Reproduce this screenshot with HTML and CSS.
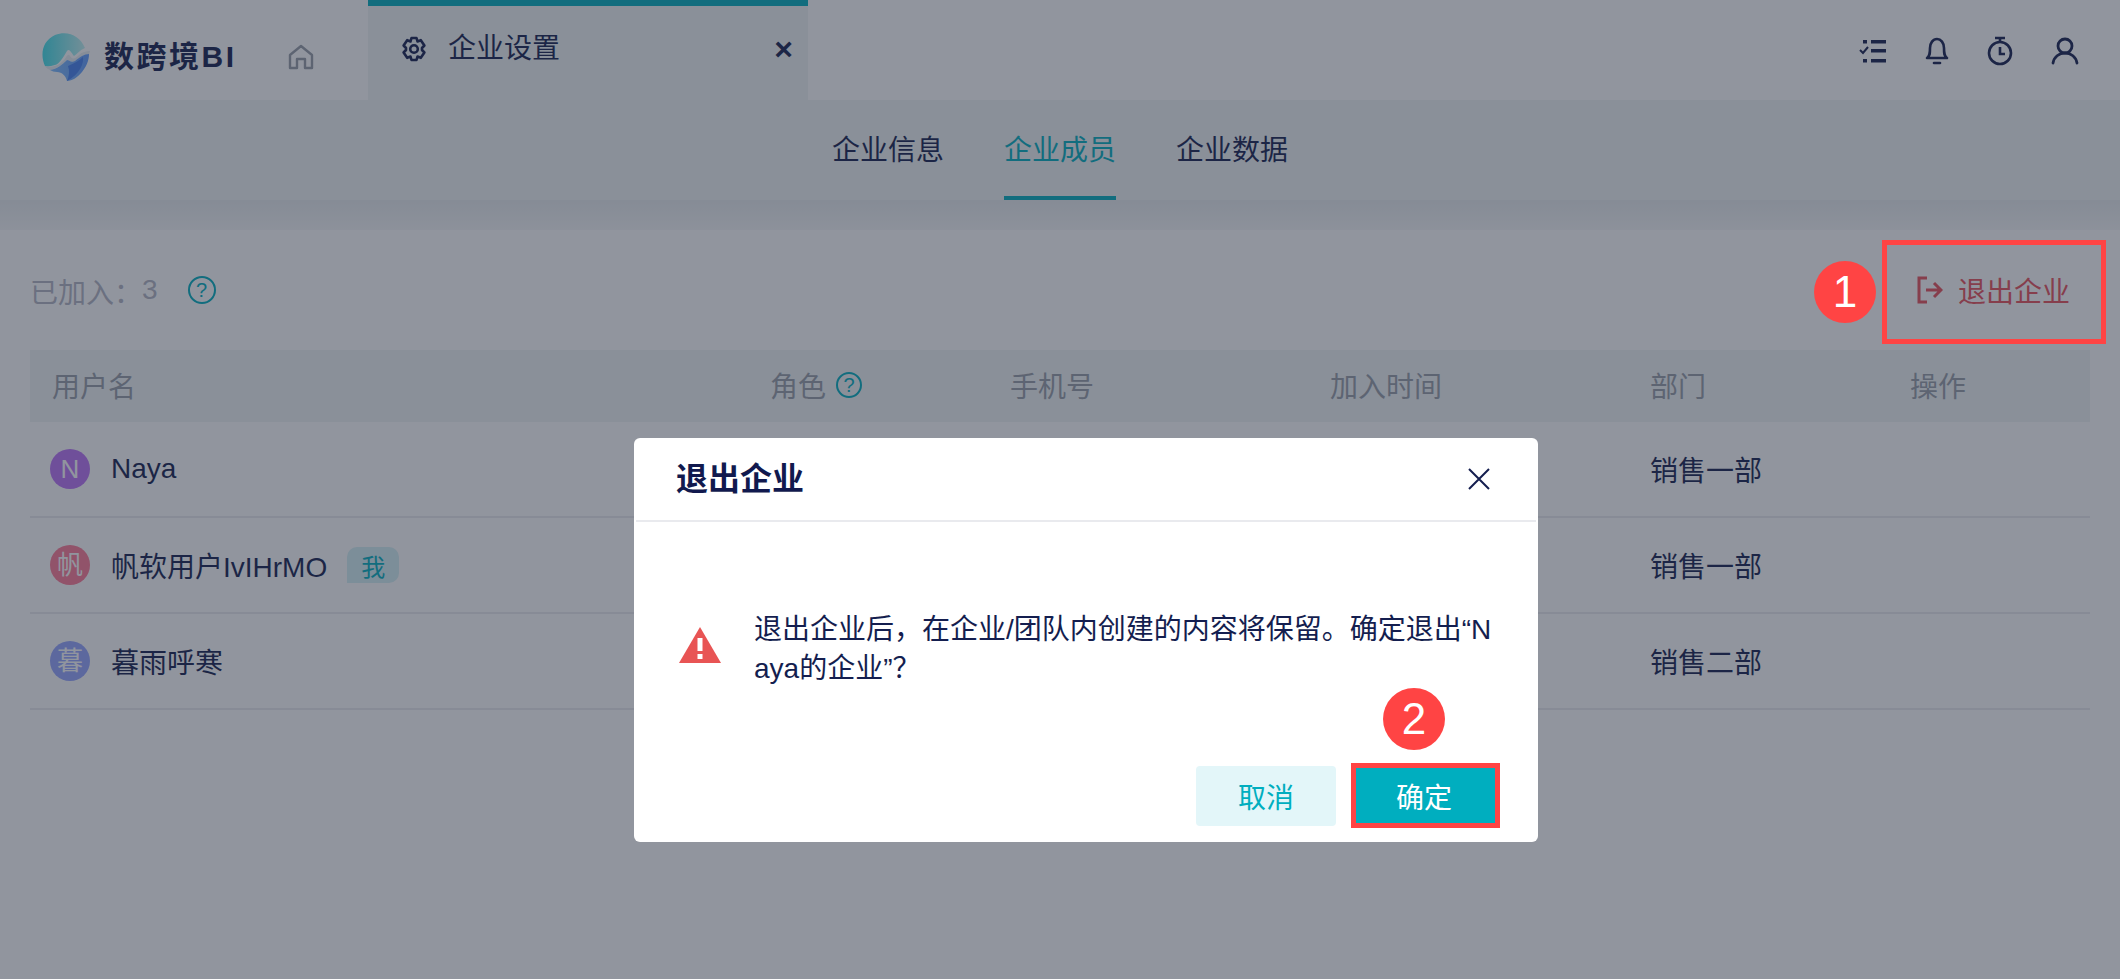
FILE: index.html
```html
<!DOCTYPE html>
<html lang="zh-CN">
<head>
<meta charset="utf-8">
<title>企业设置</title>
<link rel="stylesheet" href="styles.css">
</head>
<body>
<div class="page">
  <header class="topbar">
    <div class="brand">
      <svg class="logo" viewBox="0 0 48 48" width="48" height="48">
        <defs>
          <linearGradient id="lg1" x1="0" y1="0.3" x2="1" y2="0.3"><stop offset="0" stop-color="#3fe0ea"/><stop offset="1" stop-color="#c2f2f2"/></linearGradient>
          <linearGradient id="lg2" x1="0" y1="0" x2="1" y2="0"><stop offset="0" stop-color="#7fbdff"/><stop offset="1" stop-color="#5f9cff"/></linearGradient>
        </defs>
        <path d="M3 33C-2 22 0 8 13 2C26 -3 38 3 43 15C38 17 35 21 32 23C29 19 27 15 25 18C21 25 17 31 13 32C9 33 6 34 3 33Z" fill="url(#lg1)"/>
        <path d="M3 33C10 35 17 33 22 27C25 23 26 20 28 23C31 27 33 26 37 22C40 19 44 18 48 18L47 21C42 21 38 24 33 28C29 30 27 27 25 27C20 32 14 36 8 37C6 36 4 35 3 33Z" fill="#e8eef2"/>
        <path d="M8 37C15 36 20 32 25 27C27 27 29 30 33 28C38 24 42 21 47 21C47 28 44 34 40 39C36 44 30 48 25 48C24 43 20 39 15 39C12 39 10 38 8 37Z" fill="url(#lg2)"/>
        <path d="M26 33C32 30 37 28 41 24C42 30 38 41 25 48C27 43 28 38 26 33Z" fill="#4480f0"/>
      </svg>
      <span class="brand-name">数跨境BI</span>
    </div>
    <svg class="home" viewBox="0 0 26 26" width="26" height="26" fill="none" stroke="#979da7" stroke-width="2.400" stroke-linejoin="round"><path d="M13 2L24 11V24H17V15H9V24H2V11Z"/></svg>
    <div class="tab">
      <div class="tab-bar"></div>
      <div class="tab-body">
        <svg class="gear" viewBox="0 0 26 26" width="26" height="26" fill="none" stroke="#141e4f" stroke-width="2.600" stroke-linejoin="round"><path d="M10.500 2H15.500L16.500 5.500L19.800 4.200L23.400 9.500L21 12V14L23.400 16.500L19.800 21.800L16.500 20.500L15.500 24H10.500L9.500 20.500L6.200 21.800L2.600 16.500L5 14V12L2.600 9.500L6.200 4.200L9.500 5.500Z"/><circle cx="13" cy="13" r="3.800"/></svg>
        <span class="tab-title">企业设置</span>
        <span class="tab-close">×</span>
      </div>
    </div>
    <div class="top-icons">
      <svg viewBox="0 0 28 26" width="28" height="26" fill="#141e4f"><rect x="12" y="2" width="15" height="3.500"/><rect x="12" y="11" width="15" height="3.500"/><rect x="12" y="21" width="15" height="3.500"/><rect x="4" y="2" width="4" height="3.500"/><rect x="4" y="21" width="4" height="3.500"/><path d="M1 12L4 15L9 9" fill="none" stroke="#141e4f" stroke-width="2"/></svg>
      <svg viewBox="0 0 24 28" width="24" height="28" fill="none" stroke="#141e4f" stroke-width="2.600" stroke-linecap="round"><path d="M2 21C5 19 5 16 5 11C5 6 8 2 12 2C16 2 19 6 19 11C19 16 19 19 22 21Z" stroke-linejoin="round"/><path d="M9 26H15"/></svg>
      <svg viewBox="0 0 26 30" width="26" height="30" fill="none" stroke="#141e4f" stroke-width="2.600"><path d="M8 2H18M13 2V6"/><circle cx="13" cy="17" r="11"/><path d="M13 11V18H18"/></svg>
      <svg viewBox="0 0 28 28" width="28" height="28" fill="none" stroke="#141e4f" stroke-width="2.800" stroke-linecap="round"><circle cx="14" cy="9" r="7"/><path d="M2 26C3 20 8 16 14 16C20 16 25 20 26 26"/></svg>
    </div>
  </header>

  <nav class="subnav">
    <span class="subnav-item">企业信息</span>
    <span class="subnav-item active">企业成员</span>
    <span class="subnav-item">企业数据</span>
  </nav>
  <div class="subnav-shadow"></div>

  <main class="content">
    <div class="toolbar">
      <div class="joined">
        <span class="joined-label">已加入：</span><span class="joined-count">3</span>
        <span class="help help-large">?</span>
      </div>
      <div class="leave">
        <svg viewBox="0 0 26 28" width="26" height="28" fill="none" stroke="#e8505b" stroke-width="3"><path d="M10 2H2V26H10"/><path d="M9 14H24M17 7L24 14L17 21"/></svg>
        <span>退出企业</span>
      </div>
    </div>

    <div class="table">
      <div class="row head">
        <div>用户名</div>
        <div class="role">角色<span class="help">?</span></div>
        <div>手机号</div>
        <div>加入时间</div>
        <div>部门</div>
        <div>操作</div>
      </div>
      <div class="row">
        <div class="user"><span class="avatar purple">N</span><span>Naya</span></div>
        <div></div><div></div><div></div>
        <div>销售一部</div><div></div>
      </div>
      <div class="row">
        <div class="user"><span class="avatar rose">帆</span><span>帆软用户IvIHrMO</span><span class="me">我</span></div>
        <div></div><div></div><div></div>
        <div>销售一部</div><div></div>
      </div>
      <div class="row">
        <div class="user"><span class="avatar blue">暮</span><span>暮雨呼寒</span></div>
        <div></div><div></div><div></div>
        <div>销售二部</div><div></div>
      </div>
    </div>
  </main>

  <div class="mask">
    <section class="modal">
      <div class="modal-head">
        <h2 class="modal-title">退出企业</h2>
        <svg class="modal-close" viewBox="0 0 22 22" width="22" height="22" fill="none" stroke="#141e4f" stroke-width="2"><path d="M1 1L21 21M21 1L1 21"/></svg>
      </div>
      <div class="modal-body">
        <svg class="warn" viewBox="0 0 42 36" width="42" height="36"><path d="M21 0L42 36H0Z" fill="#e85454"/><rect x="18.500" y="11" width="5" height="13" fill="#fff"/><rect x="18.500" y="27" width="5" height="5" fill="#fff"/></svg>
        <p class="modal-text">退出企业后，在企业/团队内创建的内容将保留。确定退出“Naya的企业”？</p>
      </div>
      <div class="modal-foot">
        <button class="btn cancel">取消</button>
        <button class="btn ok">确定</button>
      </div>
    </section>
  </div>

  <div class="mark box-one"></div>
  <div class="mark box-two"></div>
  <div class="badge badge-one">1</div>
  <div class="badge badge-two">2</div>
</div>
</body>
</html>
```

FILE: styles.css
```css
* { box-sizing: border-box; }
html, body { margin: 0; padding: 0; }
body {
  font-family: "Liberation Sans", "Noto Sans CJK SC", sans-serif;
  font-size: 28px;
  color: #141e4f;
  background: #fff;
}
.page { position: relative; width: 2120px; height: 979px; overflow: hidden; background: #fff; }

.topbar { display: flex; align-items: flex-start; height: 100px; background: #fff; }
.brand { display: flex; align-items: center; gap: 14px; width: 288px; height: 100px; padding: 14px 0 0 42px; flex: none; }
.logo { flex: none; }
.brand-name { font-size: 30px; font-weight: 700; line-height: 30px; letter-spacing: 2.500px; white-space: nowrap; }
.home { margin-top: 44px; flex: none; }
.tab { width: 440px; height: 100px; margin-left: 54px; background: #f0f4f5; flex: none; }
.tab-bar { height: 6px; background: #00aebf; }
.tab-body { display: flex; align-items: center; height: 86px; padding: 0 15px 0 33px; }
.gear { flex: none; }
.tab-title { margin-left: 21px; line-height: 40px; }
.tab-close { margin-left: auto; font-size: 32px; font-weight: 700; line-height: 40px; }
.top-icons { display: flex; align-items: center; gap: 38px; margin-left: auto; padding: 36px 41px 0 0; }

.subnav { display: flex; justify-content: center; gap: 60px; height: 100px; background: #f0f4f5; }
.subnav-item { height: 100px; padding-top: 30px; line-height: 42px; border-bottom: 4px solid transparent; }
.subnav-item.active { color: #00aebf; border-bottom-color: #00aebf; }
.subnav-shadow { height: 30px; background: linear-gradient(#e8ecee, #f6f7f8); }

.content { padding: 0 30px; }
.toolbar { display: flex; justify-content: space-between; align-items: center; height: 120px; }
.joined { display: flex; align-items: center; color: #b3b5c3; }
.joined-label { margin-top: 2px; }
.joined-count { margin-top: 0; }
.help { display: inline-flex; align-items: center; justify-content: center; width: 26px; height: 26px; border: 2px solid #00aebf; border-radius: 50%; color: #00aebf; font-size: 20px; }
.help-large { width: 28px; height: 28px; margin-left: 30px; }
.leave { display: flex; align-items: center; gap: 15px; margin-right: 20px; color: #e8505b; }

.row { display: grid; grid-template-columns: 718px 240px 320px 320px 260px 1fr; align-items: center; height: 96px; padding-left: 22px; border-bottom: 2px solid #eaebef; }
.head { height: 72px; padding-bottom: 2px; color: #979da7; background: #f0f4f5; border-bottom: 0; }
.role { display: flex; align-items: center; gap: 10px; }
.user { display: flex; align-items: center; }
.avatar { display: flex; align-items: center; justify-content: center; width: 40px; height: 40px; margin-right: 21px; margin-left: -2px; border-radius: 50%; color: #fff; font-size: 26px; line-height: 40px; flex: none; }
.purple { background: #bb73f7; }
.rose { background: #ff7a96; }
.blue { background: #95a5ff; }
.me { display: flex; align-items: center; justify-content: center; width: 52px; height: 36px; margin-left: 20px; border-radius: 10px 10px 10px 0; background: #d5f0f4; color: #00aebf; font-size: 24px; }

.mask { position: absolute; inset: 0; padding: 438px 0 0 634px; background: rgba(35, 43, 61, 0.5); }
.modal { display: flex; flex-direction: column; width: 904px; height: 404px; border-radius: 6px; background: #fff; }
.modal-head { display: flex; justify-content: space-between; align-items: center; height: 84px; margin: 0 2px; padding: 0 46px 0 40px; border-bottom: 2px solid #e9eaee; }
.modal-title { margin: 0; font-size: 32px; line-height: 44px; font-weight: 700; color: #11194e; }
.modal-close { flex: none; }
.modal-body { display: flex; align-items: center; height: 244px; padding: 10px 0 0 45px; }
.warn { flex: none; margin-top: -8px; }
.modal-text { width: 742px; margin: 0 0 0 33px; line-height: 39px; word-break: break-all; }
.modal-foot { display: flex; justify-content: flex-end; gap: 16px; padding: 0 42px 0 0; }
.btn { width: 140px; height: 60px; padding: 0; border: 0; border-radius: 4px; font: inherit; }
.cancel { background: #e3f6f9; color: #00aebf; }
.ok { width: 144px; background: #00aebf; color: #fff; }

.mark { position: absolute; border: 5px solid #ff4444; }
.box-one { left: 1882px; top: 240px; width: 224px; height: 104px; }
.box-two { left: 1351px; top: 763px; width: 149px; height: 65px; }
.badge { position: absolute; display: flex; align-items: center; justify-content: center; width: 62px; height: 62px; border-radius: 50%; background: #ff4444; color: #fff; font-size: 44px; line-height: 62px; }
.badge-one { left: 1814px; top: 261px; }
.badge-two { left: 1383px; top: 688px; }
```
